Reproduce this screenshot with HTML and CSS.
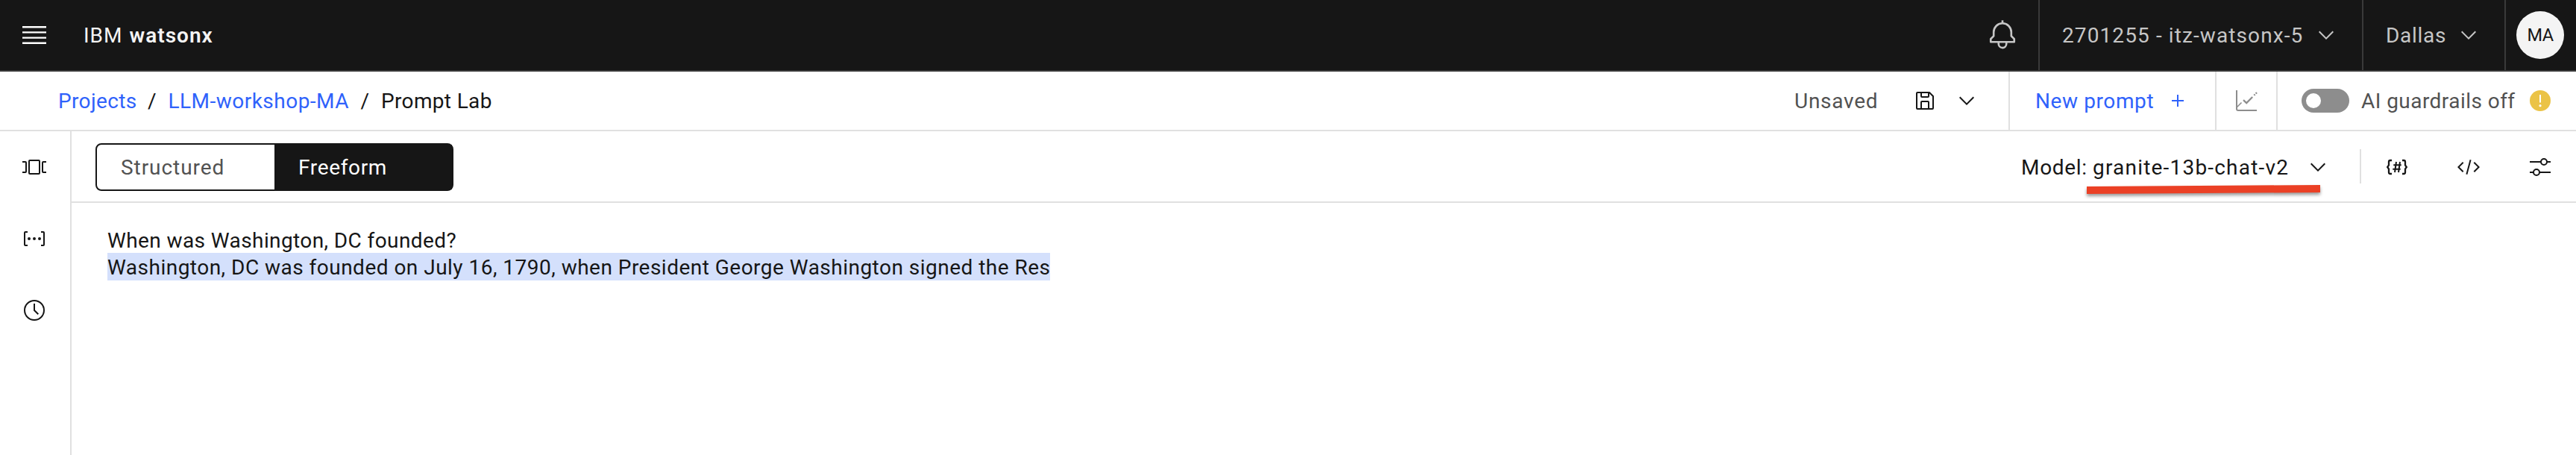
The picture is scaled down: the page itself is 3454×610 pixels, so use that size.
FILE: index.html
```
<!DOCTYPE html>
<html lang="en">
<head>
<meta charset="utf-8">
<title>Prompt Lab - IBM watsonx</title>
<link rel="stylesheet" href="styles.css">
</head>
<body>
<header class="header">
  <svg class="menu" viewBox="0 0 32 24"><path d="M0 0h32v2.4H0zM0 7.2h32v2.4H0zM0 14.4h32v2.4H0zM0 21.6h32V24H0z"/></svg>
  <div class="brand"><span class="brand-ibm">IBM</span><strong class="brand-product">watsonx</strong></div>
  <div class="header-actions">
    <svg class="bell" viewBox="0 0 32 32"><path d="M28.707 19.293 26 16.586V13a10.014 10.014 0 0 0-9-9.95V1h-2v2.05A10.014 10.014 0 0 0 6 13v3.586l-2.707 2.707A1 1 0 0 0 3 20v3a1 1 0 0 0 1 1h7v.777a5.152 5.152 0 0 0 4.5 5.199A5.006 5.006 0 0 0 21 25v-1h7a1 1 0 0 0 1-1v-3a1 1 0 0 0-.293-.707ZM19 25a3 3 0 0 1-6 0v-1h6Zm8-3H5v-1.586l2.707-2.707A1 1 0 0 0 8 17v-4a8 8 0 0 1 16 0v4a1 1 0 0 0 .293.707L27 20.414Z"/></svg>
    <div class="header-cell account"><span class="account-name">2701255 - itz-watsonx-5</span><svg class="icon" viewBox="0 0 32 32"><path d="M16 22 6 12l1.4-1.4 8.6 8.6 8.6-8.6L26 12z"/></svg></div>
    <div class="header-cell region"><span class="region-name">Dallas</span><svg class="icon" viewBox="0 0 32 32"><path d="M16 22 6 12l1.4-1.4 8.6 8.6 8.6-8.6L26 12z"/></svg></div>
    <div class="header-cell user"><span class="avatar">MA</span></div>
  </div>
</header>

<nav class="subheader">
  <div class="breadcrumb">
    <a class="crumb crumb-projects">Projects</a><span class="slash">/</span><a class="crumb crumb-project">LLM-workshop-MA</a><span class="slash">/</span><span class="crumb crumb-current">Prompt Lab</span>
  </div>
  <div class="sub-actions">
    <div class="save-cell"><span class="unsaved">Unsaved</span>
      <svg class="icon save" viewBox="0 0 32 32"><path d="m27.71 9.29-5-5A1 1 0 0 0 22 4H6a2 2 0 0 0-2 2v20a2 2 0 0 0 2 2h20a2 2 0 0 0 2-2V10a1 1 0 0 0-.29-.71ZM12 6h8v4h-8Zm8 20h-8v-8h8Zm2 0v-8a2 2 0 0 0-2-2h-8a2 2 0 0 0-2 2v8H6V6h4v4a2 2 0 0 0 2 2h8a2 2 0 0 0 2-2V6.41l4 4V26Z"/></svg>
      <svg class="icon" viewBox="0 0 32 32"><path d="M16 22 6 12l1.4-1.4 8.6 8.6 8.6-8.6L26 12z"/></svg>
    </div>
    <div class="sub-cell new-cell"><span class="new-prompt">New prompt</span><svg class="icon" viewBox="0 0 32 32"><path d="M17 15V8h-2v7H8v2h7v7h2v-7h7v-2z"/></svg></div>
    <div class="sub-cell chart-cell"><svg class="icon chart" viewBox="0 0 32 32"><path stroke-width="2" d="M3 2v25a2 2 0 0 0 2 2h25"/><path stroke-width="1.6" d="m3.5 24.5 6-6"/><path stroke-width="2.3" d="m12 15.2 4.2 3.9 8-8.1M26.3 8.8l1.3-1.3M28.6 6.5 30 5.1"/></svg></div>
    <div class="sub-cell guard-cell"><span class="toggle"><span class="knob"></span></span><span class="guard-label">AI guardrails off</span>
      <svg class="icon" viewBox="0 0 32 32"><circle class="warn" cx="16" cy="16" r="14"/><path class="bang" d="M15 8h2v10.5h-2z"/><circle class="bang" cx="16" cy="22.7" r="1.6"/></svg>
    </div>
  </div>
</nav>

<div class="workspace">
  <aside class="rail">
    <svg class="icon line" viewBox="0 0 32 32"><rect x="9" y="7" width="14" height="18" rx="1"/><path d="M0 9h4a1 1 0 0 1 1 1v12a1 1 0 0 1-1 1H0M32 9h-4a1 1 0 0 0-1 1v12a1 1 0 0 0 1 1h4"/></svg>
    <svg class="icon line" viewBox="0 0 32 32"><path d="M7 7H4a1 1 0 0 0-1 1v16a1 1 0 0 0 1 1h3M25 7h3a1 1 0 0 1 1 1v16a1 1 0 0 1-1 1h-3"/><path class="solid" d="M7 16a2 2 0 0 1 4 0 2 2 0 0 1-4 0M14 16a2 2 0 0 1 4 0 2 2 0 0 1-4 0M21 16a2 2 0 0 1 4 0 2 2 0 0 1-4 0"/></svg>
    <svg class="icon line" viewBox="0 0 32 32"><circle cx="16" cy="16" r="13"/><path d="M16 7v9l5.3 5.3"/></svg>
  </aside>
  <main class="editor">
    <div class="toolbar">
      <div class="switcher"><span class="tab tab-structured">Structured</span><span class="tab tab-freeform">Freeform</span></div>
      <div class="tools">
        <div class="model"><span class="model-key">Model:</span><span class="model-name">granite-13b-chat-v2</span><svg class="icon" viewBox="0 0 32 32"><path d="M16 22 6 12l1.4-1.4 8.6 8.6 8.6-8.6L26 12z"/></svg>
          <svg class="marker" viewBox="0 0 313 12"><path d="M0 2 313 0v10L0 12z"/></svg>
        </div>
        <span class="separator"></span>
        <svg class="icon line" viewBox="0 0 32 32"><path stroke-width="2.3" d="M9 7H7a2 2 0 0 0-2 2v4.3L3.2 16 5 18.7V23a2 2 0 0 0 2 2h2M23 7h2a2 2 0 0 1 2 2v4.3l1.8 2.7-1.8 2.7V23a2 2 0 0 1-2 2h-2"/><path d="m15 9-2 14M20 9l-2 14M11.3 13.3h10.4M10.3 18.7h10.4"/></svg>
        <svg class="icon" viewBox="0 0 32 32"><path d="m31 16-7 7-1.41-1.41L28.17 16l-5.58-5.59L24 9zM1 16l7-7 1.41 1.41L3.83 16l5.58 5.59L8 23zM12.42 25.484 17.64 6l1.932.517L14.352 26z"/></svg>
        <svg class="icon line" viewBox="0 0 32 32"><path d="M2 9h15M25 9h5M2 23h5M15 23h15"/><circle cx="21" cy="9" r="4"/><circle cx="11" cy="23" r="4"/></svg>
      </div>
    </div>
    <div class="prompt">
      <p class="question">When was Washington, DC founded?</p>
      <p class="answer">Washington, DC was founded on July 16, 1790, when President George Washington signed the Res</p>
    </div>
  </main>
</div>
</body>
</html>
```

FILE: styles.css
```
* { box-sizing: border-box; }
body {
  margin: 0;
  height: 610px;
  overflow: hidden;
  display: flex;
  flex-direction: column;
  background: #fff;
  color: #161616;
  font: 28px/36px Roboto, "Liberation Sans", sans-serif;
  white-space: nowrap;
}
svg { display: block; flex: none; overflow: visible; }
.icon { width: 32px; height: 32px; fill: currentColor; }
.line { fill: none; stroke: currentColor; stroke-width: 2; }
.solid { fill: currentColor; stroke: none; }

/* Global header */
.header {
  flex: none;
  display: flex;
  align-items: center;
  height: 96px;
  padding-left: 30px;
  background: #161616;
  border-bottom: 2px solid #393939;
  color: #f4f4f4;
}
.menu { width: 32px; height: 24px; fill: #fff; }
.brand { display: flex; gap: 9px; margin-left: 50px; padding-top: 2px; }
.brand-ibm { letter-spacing: 1px; }
.brand-product { font-weight: 600; letter-spacing: 1px; }
.header-actions { display: flex; align-items: center; align-self: stretch; margin-left: auto; color: #c6c6c6; }
.bell { width: 42px; height: 42px; margin-right: 27px; fill: currentColor; }
.header-cell {
  display: flex;
  align-items: center;
  justify-content: space-between;
  align-self: stretch;
  border-left: 2px solid #393939;
}
.account { width: 434px; padding: 0 32px 0 30px; }
.account-name, .region-name { padding-top: 2px; }
.account-name { letter-spacing: 1.1px; }
.region { width: 191px; padding: 0 32px 0 30px; }
.region-name { letter-spacing: .7px; }
.user { width: 96px; padding-left: 14px; }
.avatar {
  width: 64px;
  height: 64px;
  border-radius: 50%;
  background: #f4f4f4;
  color: #161616;
  font-size: 23.5px;
  line-height: 64px;
  text-align: center;
  letter-spacing: -.5px;
}

/* Breadcrumb bar */
.subheader { flex: none; display: flex; align-items: center; height: 80px; padding-left: 78px; border-bottom: 2px solid #e0e0e0; }
.breadcrumb { display: flex; padding-top: 2px; }
.crumb-projects, .crumb-project { color: #2f62fb; }
.crumb-projects { width: 104px; letter-spacing: .35px; }
.slash { width: 43.5px; text-align: center; }
.crumb-project { width: 242px; letter-spacing: .48px; }
.crumb-current { letter-spacing: .35px; }
.sub-actions { display: flex; align-self: stretch; margin-left: auto; }
.save-cell { display: flex; align-items: center; width: 287px; }
.unsaved { width: 159px; padding-top: 2px; letter-spacing: .75px; color: #525252; }
.save { margin-right: 24px; }
.sub-cell { display: flex; align-items: center; border-left: 2px solid #e0e0e0; }
.new-cell { width: 277px; padding: 0 34px; justify-content: space-between; color: #2f62fb; }
.new-prompt { padding-top: 2px; letter-spacing: .6px; }
.chart-cell { width: 82px; padding-left: 24px; color: #8d8d8d; }
.chart { fill: none; stroke: currentColor; }
.guard-cell { width: 402px; padding-left: 32px; }
.toggle { display: flex; align-items: center; width: 64px; height: 32px; padding: 6px; border-radius: 16px; background: #8d8d8d; }
.knob { width: 20px; height: 20px; border-radius: 50%; background: #fff; }
.guard-label { width: 240px; padding: 2px 0 0 16px; color: #525252; letter-spacing: .45px; }
.warn { fill: #ebc346; }
.bang { fill: #fff; }

/* Workspace */
.workspace { flex: 1; display: flex; }
.rail { display: flex; flex-direction: column; align-items: flex-start; gap: 64px; width: 96px; padding: 32px 0 0 30px; border-right: 2px solid #e0e0e0; }
.editor { flex: 1; display: flex; flex-direction: column; }
.toolbar { display: flex; align-items: center; justify-content: space-between; height: 96px; padding: 2px 32px 0; border-bottom: 2px solid #e0e0e0; }
.switcher { display: flex; width: 480px; height: 64px; border: 2px solid #161616; border-radius: 8px; line-height: 60px; }
.tab { flex: 1; padding: 1px 0 0 32px; line-height: 59px; }
.tab-structured { color: #525252; letter-spacing: .95px; }
.tab-freeform { background: #161616; color: #fff; letter-spacing: .65px; }
.tools { display: flex; align-items: center; gap: 64px; }
.model { position: relative; display: flex; align-items: center; width: 414px; margin-right: -16px; }
.model-key, .model-name { padding-top: 2px; }
.model-key { width: 96px; letter-spacing: .7px; }
.model-name { width: 286px; letter-spacing: 1.2px; }
.marker { position: absolute; left: 88px; top: 43px; width: 313px; height: 12px; fill: #eb4025; filter: drop-shadow(0 3px 2px rgba(0, 0, 0, .4)); }
.separator { width: 2px; height: 46px; margin: -2px -32px 0 -8px; background: #e0e0e0; }

.prompt { padding: 33px 0 0 48px; }
.question, .answer { margin: 0; width: fit-content; letter-spacing: .4px; }
.answer { height: 37px; margin-top: -2px; padding-top: 2px; letter-spacing: .48px; background: #d4e0fc; }
```
